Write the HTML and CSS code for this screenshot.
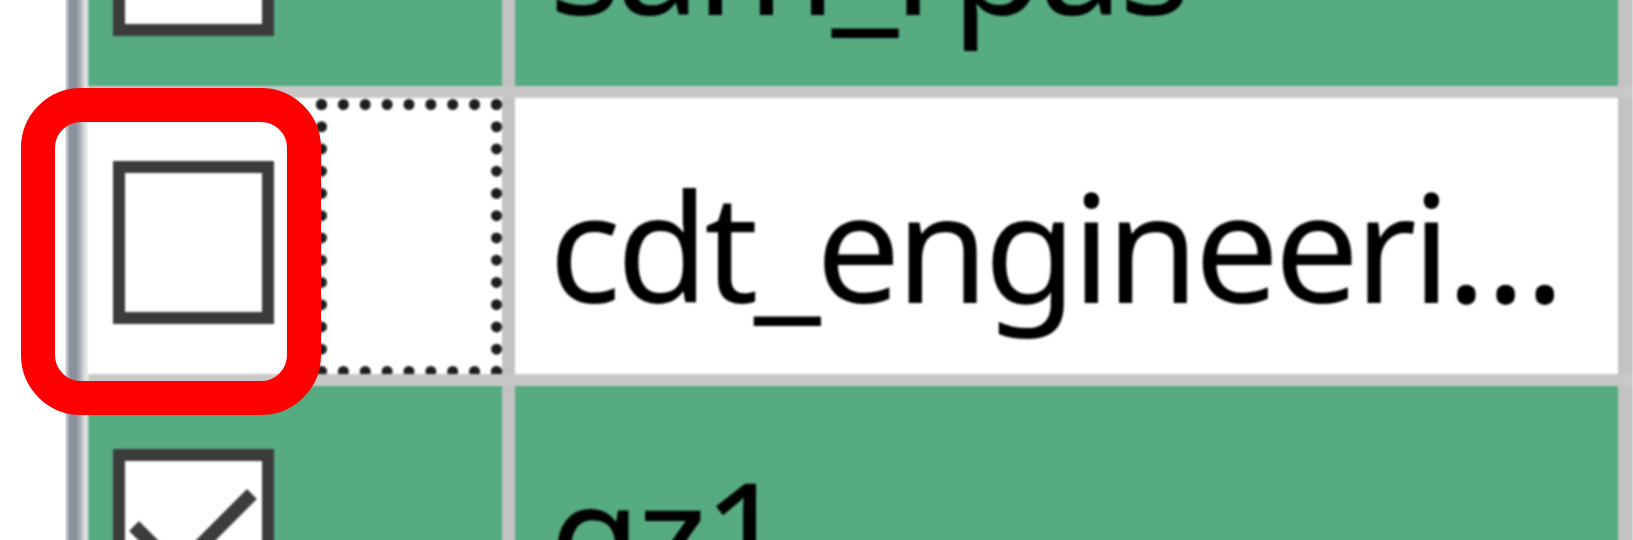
FILE: index.html
```html
<!DOCTYPE html>
<html lang="en">
<head>
<meta charset="utf-8">
<title>Grid zoom</title>
<link rel="stylesheet" href="styles.css">
</head>
<body>
<div class="viewport">
  <div class="gutter"></div>
  <div class="rowbar"></div>
  <div class="grid">
    <div class="row row-green">
      <div class="cell-check">
        <span class="checkbox"></span>
      </div>
      <div class="vline"></div>
      <div class="cell-text">sam_rpas</div>
      <div class="vline vline-end"></div>
    </div>
    <div class="hline"></div>
    <div class="row row-white">
      <div class="cell-check">
        <span class="checkbox"></span>
        <span class="focus-rect"></span>
      </div>
      <div class="vline"></div>
      <div class="cell-text">cdt_engineeri…</div>
      <div class="vline vline-end"></div>
    </div>
    <div class="hline"></div>
    <div class="row row-green">
      <div class="cell-check">
        <span class="checkbox">
          <svg class="checkmark" viewBox="0 0 137 137" width="137" height="137">
            <polyline points="14,70 52,108 122,38" fill="none" stroke="#3c3c3c" stroke-width="14" stroke-linecap="square"/>
          </svg>
        </span>
      </div>
      <div class="vline"></div>
      <div class="cell-text">gz1</div>
      <div class="vline vline-end"></div>
    </div>
  </div>
  <div class="highlight"></div>
</div>
</body>
</html>
```
FILE: styles.css
```css
html, body {
  margin: 0;
  padding: 0;
  background: #ffffff;
}

.viewport {
  position: relative;
  width: 1633px;
  height: 540px;
  overflow: hidden;
  display: flex;
  background: #ffffff;
}

.gutter {
  flex: 0 0 65px;
  background: #ffffff;
}

.rowbar {
  flex: 0 0 23px;
  background: linear-gradient(to right,
    #eef0f3 0px,
    #b9bec6 2px,
    #8b929d 5px,
    #8b929d 11px,
    #a9aeb5 15px,
    #d6d7d9 19px,
    #ececec 23px);
  filter: blur(0.6px);
}

.grid {
  flex: 0 0 1545px;
  margin-top: -190px;
  display: flex;
  flex-direction: column;
  filter: blur(1.2px);
}

.row {
  display: flex;
  height: 276px;
  flex: 0 0 276px;
}

.row-green {
  background: #56ab81;
}

.row-white {
  background: #ffffff;
}

.hline {
  flex: 0 0 12px;
  background: #c8c8c8;
}

.cell-check {
  flex: 0 0 414px;
  display: flex;
  align-items: flex-start;
  box-sizing: border-box;
  padding-left: 25px;
  padding-top: 63px;
}

.checkbox {
  position: relative;
  display: block;
  box-sizing: border-box;
  width: 161px;
  height: 163px;
  border: 12px solid #3b3b3b;
  background: #ffffff;
}

.checkmark {
  display: block;
}

.focus-rect {
  display: block;
  box-sizing: border-box;
  width: 186px;
  height: 278px;
  margin-left: 42px;
  margin-top: -62px;
  border: 11px dotted #1e1e1e;
}

.vline {
  flex: 0 0 13px;
  background: #c2c2c2;
}

.vline-end {
  flex: 0 0 15px;
}

.cell-text {
  flex: 0 0 1103px;
  box-sizing: border-box;
  padding-left: 34px;
  padding-top: 18px;
  font-family: "Noto Sans", "Open Sans", sans-serif;
  font-size: 150px;
  line-height: 258px;
  letter-spacing: -4.5px;
  color: #000000;
  white-space: nowrap;
  overflow: hidden;
}

.highlight {
  position: absolute;
  left: 21px;
  top: 88px;
  width: 300px;
  height: 327px;
  box-sizing: border-box;
  border: 34px solid #fe0000;
  border-radius: 60px;
}
```
